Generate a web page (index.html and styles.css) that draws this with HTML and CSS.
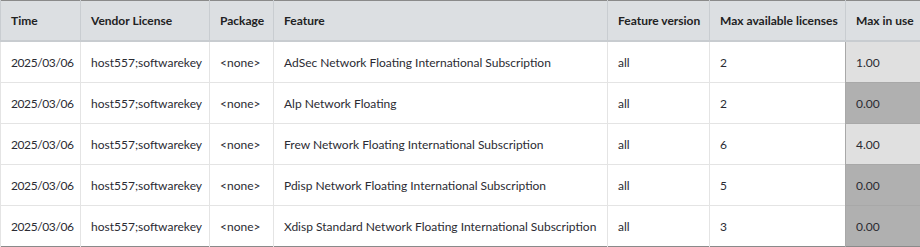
FILE: index.html
```html
<!DOCTYPE html>
<html>
<head>
<meta charset="utf-8">
<link rel="stylesheet" href="styles.css">
</head>
<body>
<table class="lic">
  <colgroup>
    <col class="c-time"><col class="c-vendor"><col class="c-pkg"><col class="c-feat"><col class="c-ver"><col class="c-max"><col class="c-use">
  </colgroup>
  <thead>
    <tr><th>Time</th><th>Vendor License</th><th>Package</th><th>Feature</th><th>Feature version</th><th>Max available licenses</th><th>Max in use</th></tr>
  </thead>
  <tbody>
    <tr><td class="date">2025/03/06</td><td>host557;softwarekey</td><td>&lt;none&gt;</td><td>AdSec Network Floating International Subscription</td><td>all</td><td>2</td><td class="use light">1.00</td></tr>
    <tr><td class="date">2025/03/06</td><td>host557;softwarekey</td><td>&lt;none&gt;</td><td>Alp Network Floating</td><td>all</td><td>2</td><td class="use dark">0.00</td></tr>
    <tr><td class="date">2025/03/06</td><td>host557;softwarekey</td><td>&lt;none&gt;</td><td>Frew Network Floating International Subscription</td><td>all</td><td>6</td><td class="use light">4.00</td></tr>
    <tr><td class="date">2025/03/06</td><td>host557;softwarekey</td><td>&lt;none&gt;</td><td>Pdisp Network Floating International Subscription</td><td>all</td><td>5</td><td class="use dark">0.00</td></tr>
    <tr><td class="date">2025/03/06</td><td>host557;softwarekey</td><td>&lt;none&gt;</td><td>Xdisp Standard Network Floating International Subscription</td><td>all</td><td>3</td><td class="use dark">0.00</td></tr>
  </tbody>
</table>
</body>
</html>
```
FILE: styles.css
```css
html, body { margin: 0; padding: 0; background: #fff; }
body { font-family: "Lato", "Noto Sans", sans-serif; font-size: 12px; color: #2b2b33; }
.lic { border-collapse: collapse; table-layout: fixed; width: 920px; border: 1px solid #8a8a8a; }
.c-time { width: 80px; }
.c-vendor { width: 129px; }
.c-pkg { width: 64px; }
.c-feat { width: 334px; }
.c-ver { width: 102px; }
.c-max { width: 136px; }
.c-use { width: 75px; }
.lic th { background: #dcdfe2; font-weight: 700; color: #222; text-align: left; height: 39px; padding: 0 10px; border-left: 1px solid #c9cdd1; border-bottom: 2px solid #c8ccd0; white-space: nowrap; }
.lic td { height: 40px; padding: 0 10px; border-left: 1px solid #e4e4e4; border-top: 1px solid #e4e4e4; white-space: nowrap; }
.lic td.date { letter-spacing: -0.4px; }
.lic td.use { border-left: 1px solid #a8a8a8; border-top: 1px solid #a8a8a8; }
.lic td.light { background: #e0e0e0; }
.lic td.dark { background: #b0b0b0; }
```
